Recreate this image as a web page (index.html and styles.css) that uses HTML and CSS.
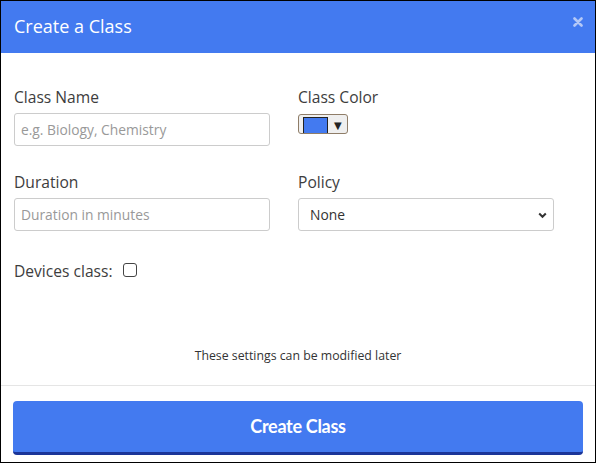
FILE: index.html
```html
<!DOCTYPE html>
<html>
<head>
<meta charset="utf-8">
<link rel="stylesheet" href="styles.css">
</head>
<body>
<div class="modal">
  <div class="modal-header">
    <h1 class="modal-title">Create a Class</h1>
    <svg class="close" width="10" height="10" viewBox="0 0 10 10"><path d="M1.5 1.5 L8.5 8.5 M8.5 1.5 L1.5 8.5" stroke="#b4c8f7" stroke-width="2.6" stroke-linecap="round"/></svg>
  </div>
  <div class="modal-body">
    <div class="grid">
      <div class="field">
        <label class="label">Class Name</label>
        <input class="input" type="text" placeholder="e.g. Biology, Chemistry">
      </div>
      <div class="field">
        <label class="label">Class Color</label>
        <div class="color-picker">
          <span class="swatch"></span>
          <span class="arrow">&#9660;</span>
        </div>
      </div>
      <div class="field">
        <label class="label">Duration</label>
        <input class="input" type="text" placeholder="Duration in minutes">
      </div>
      <div class="field">
        <label class="label">Policy</label>
        <div class="select">
          <span>None</span>
          <svg class="chev" width="9" height="7" viewBox="0 0 9 7"><path d="M1.2 1.5 L4.5 4.8 L7.8 1.5" fill="none" stroke="#333" stroke-width="2"/></svg>
        </div>
      </div>
    </div>
    <div class="devices">
      <span class="label">Devices class:</span>
      <span class="checkbox"></span>
    </div>
    <p class="note">These settings can be modified later</p>
  </div>
  <div class="modal-footer">
    <button class="btn">Create Class</button>
  </div>
</div>
</body>
</html>
```
FILE: styles.css
```css
* { box-sizing: border-box; }
html, body { margin: 0; padding: 0; }
body {
  width: 596px;
  height: 463px;
  font-family: "Open Sans", "Noto Sans", sans-serif;
  background: #fff;
}
.modal {
  width: 596px;
  height: 463px;
  border: 1px solid #000;
  display: flex;
  flex-direction: column;
  background: #fff;
}
.modal-header {
  height: 52px;
  background: #437af0;
  display: flex;
  align-items: center;
  justify-content: space-between;
  padding: 0 13px 0 13px;
}
.modal-title {
  margin: 0;
  font-size: 18px;
  font-weight: 400;
  color: #fff;
  line-height: 24px;
  position: relative;
  top: -1px;
}
.close {
  position: relative;
  top: -5px;
  right: -1px;
}
.modal-body {
  padding: 34px 13px 0 13px;
  flex: 1;
  display: flex;
  flex-direction: column;
}
.grid {
  display: grid;
  grid-template-columns: 256px 256px;
  column-gap: 28px;
  row-gap: 26px;
}
.field { display: flex; flex-direction: column; }
.label {
  font-size: 15.6px;
  line-height: 20px;
  color: #3d3d3d;
  margin-bottom: 6px;
}
.input {
  height: 33px;
  border: 1px solid #ccc;
  border-radius: 3px;
  padding: 0 6px;
  font-family: "Open Sans", sans-serif;
  font-size: 13.8px;
  color: #333;
  outline: none;
}
.input::placeholder { color: #999; }
.color-picker {
  width: 50px;
  height: 20px;
  margin-top: 1px;
  border: 1px solid #8f7d68;
  border-radius: 3px;
  background: #efefef;
  display: flex;
  align-items: flex-end;
  padding: 0 0 0 4px;
}
.swatch {
  width: 25px;
  height: 16px;
  background: #437af0;
  border: 1px solid #222;
  border-bottom: none;
}
.arrow {
  font-size: 10px;
  color: #222;
  margin-left: 6px;
  margin-bottom: 2px;
  font-family: "DejaVu Sans", sans-serif;
}
.select {
  height: 33px;
  border: 1px solid #ccc;
  border-radius: 3px;
  padding: 0 6px 0 11px;
  display: flex;
  align-items: center;
  justify-content: space-between;
  font-size: 13.8px;
  color: #333;
}
.chev { margin-top: 1px; }
.devices {
  margin-top: 30px;
  display: flex;
  align-items: center;
}
.devices .label { margin: 0; }
.checkbox {
  width: 14px;
  height: 14px;
  border: 1px solid #444;
  border-radius: 3px;
  margin-left: 10px;
  margin-top: -2px;
}
.note {
  margin: auto 0 0 0;
  padding-bottom: 21px;
  text-align: center;
  font-size: 12.3px;
  color: #333;
  line-height: 16px;
}
.modal-footer {
  border-top: 1px solid #e5e5e5;
  padding: 15px 12px 7px 12px;
}
.btn {
  width: 100%;
  height: 54px;
  border: none;
  border-bottom: 3px solid #1b3598;
  border-radius: 4px;
  background: #437af0;
  color: #fff;
  font-family: "Lato", sans-serif;
  font-weight: 700;
  font-size: 18px;
  letter-spacing: -0.3px;
  padding-top: 0;
}
```
